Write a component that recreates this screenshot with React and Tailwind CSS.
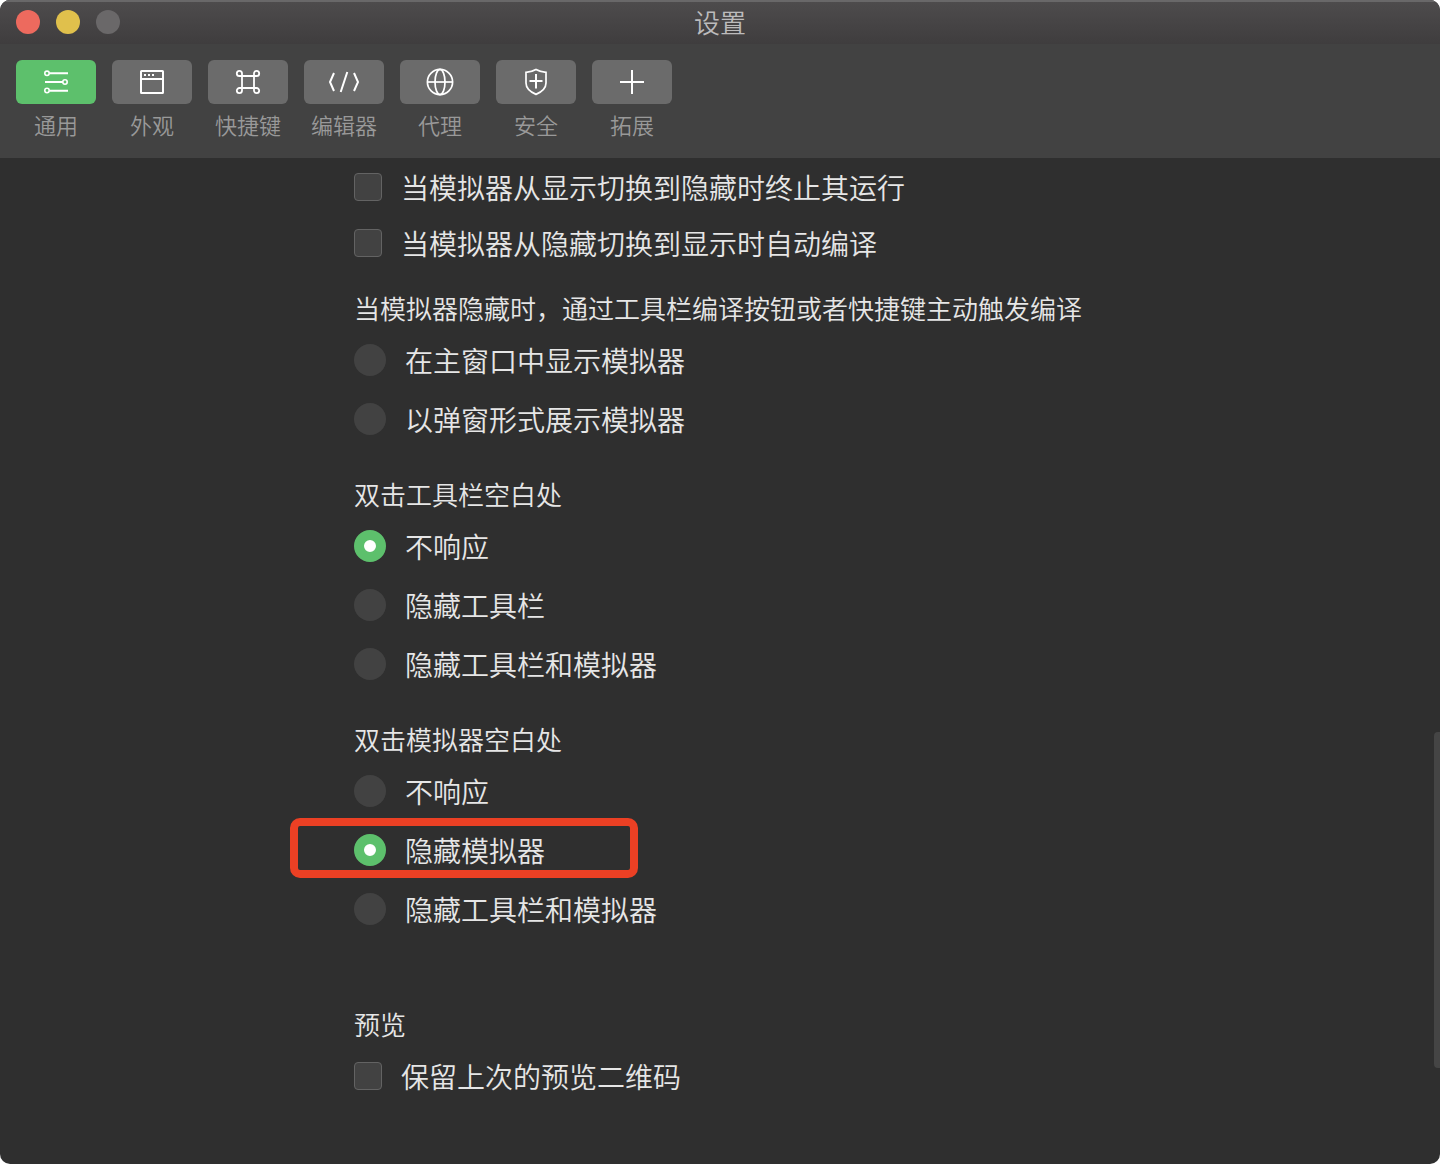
import { useState } from "react";

const iconProps = {
  width: 32,
  height: 32,
  viewBox: "0 0 32 32",
  fill: "none",
  stroke: "#fff",
  strokeWidth: 2,
  "aria-hidden": true,
};

const icons = {
  general: (
    <svg {...iconProps}>
      <circle cx="7" cy="7.3" r="2.2" strokeWidth="1.6" />
      <path d="M9.5 7.3H28M5 16h18M9.5 24.7H28" />
      <circle cx="25" cy="16" r="2.2" strokeWidth="1.6" />
      <circle cx="7" cy="24.5" r="2.2" strokeWidth="1.6" />
    </svg>
  ),
  appearance: (
    <svg {...iconProps}>
      <rect x="5" y="5" width="22" height="22" rx="0.5" />
      <path d="M5 13h22" />
      <path d="M8 9h2M12 9h2M16 9h2" />
    </svg>
  ),
  shortcuts: (
    <svg {...iconProps} strokeWidth="1.8">
      <path d="M10 10h12v12H10z" />
      <path d="M10 10V7.4A2.6 2.6 0 1 0 7.4 10H10zM22 10h2.6A2.6 2.6 0 1 0 22 7.4V10zM22 22v2.6a2.6 2.6 0 1 0 2.6-2.6H22zM10 22H7.4a2.6 2.6 0 1 0 2.6 2.6V22z" />
    </svg>
  ),
  editor: (
    <svg {...iconProps} strokeWidth="2">
      <path d="M6 7L2 16l4 9M19.3 6l-6.6 20M26 7l4 9-4 9" />
    </svg>
  ),
  proxy: (
    <svg {...iconProps} strokeWidth="1.7">
      <circle cx="16" cy="16" r="12.6" />
      <ellipse cx="16" cy="16" rx="5" ry="12.6" />
      <path d="M3.4 16h25.2" />
    </svg>
  ),
  security: (
    <svg {...iconProps} strokeWidth="1.7">
      <path d="M16 3.6c3 1.8 6.3 2.6 10 2.8v10.6c0 5-4.5 9-10 11.4C10.5 26 6 22 6 17V6.400c3.700-.2 7-1 10-2.800z" />
      <path d="M9.500 15h13M16 8v14.500" strokeWidth="2" />
    </svg>
  ),
  extensions: (
    <svg {...iconProps}>
      <path d="M4 16h24M16 4v24" />
    </svg>
  ),
};

const tabs = [
  ["general", "通用"],
  ["appearance", "外观"],
  ["shortcuts", "快捷键"],
  ["editor", "编辑器"],
  ["proxy", "代理"],
  ["security", "安全"],
  ["extensions", "拓展"],
];

function Check({ label, className }) {
  return (
    <label className={`flex items-center text-[28px] leading-8 ${className}`}>
      <input
        type="checkbox"
        className="mr-[19px] size-7 shrink-0 appearance-none rounded-sm border border-[#636363] bg-[#424242] checked:bg-[#5dc06c]"
      />
      {label}
    </label>
  );
}

function RadioGroup({ title, name, options, initial, highlighted, className }) {
  const [value, setValue] = useState(initial);
  return (
    <fieldset className={className}>
      <legend className="flex h-[45px] items-center text-[26px] leading-8">{title}</legend>
      {options.map((option) => (
        <div key={option} className="relative flex h-[59px] items-center">
          <label className="flex items-center text-[28px] leading-8">
            <input
              type="radio"
              name={name}
              checked={value === option}
              onChange={() => setValue(option)}
              className="mr-[19px] size-8 shrink-0 appearance-none rounded-full bg-[#424242] checked:border-10 checked:border-[#5dc06c] checked:bg-white"
            />
            {option}
          </label>
          {highlighted === option && (
            <span className="pointer-events-none absolute -top-0.5 -left-16 h-[60px] w-[348px] rounded-[10px] border-8 border-[#eb4024]" />
          )}
        </div>
      ))}
    </fieldset>
  );
}

export default function App() {
  const [tab, setTab] = useState("general");
  return (
    <div className="min-h-screen bg-white font-['Noto_Sans_CJK_SC',sans-serif] font-[350]">
      <div className="relative flex min-h-screen flex-col overflow-hidden rounded-[10px] bg-[#2f2f2f] text-[#e6e6e6]">
        <header className="relative flex h-11 items-center justify-center bg-linear-to-b from-[#4e4c4d] to-[#3f3d3e] pb-px inset-shadow-[0_2px_0_#696869]">
          <div className="absolute top-2.5 left-4 flex gap-4">
            <button type="button" aria-label="关闭" className="size-6 rounded-full bg-[#ed6a5e]" />
            <button type="button" aria-label="最小化" className="size-6 rounded-full bg-[#e0c04c]" />
            <button type="button" aria-label="缩放" className="size-6 rounded-full bg-[#6a6869]" />
          </div>
          <h1 className="text-[26px] leading-8 text-[#bcbbbc]">设置</h1>
        </header>

        <nav className="flex gap-4 bg-[#424242] px-4 pt-4 pb-[18px]">
          {tabs.map(([id, label]) => (
            <button
              key={id}
              type="button"
              onClick={() => setTab(id)}
              className="flex w-20 flex-col items-center gap-1 text-[22px] leading-8 text-[#999999]"
            >
              <span
                className={`flex h-11 w-full items-center justify-center rounded-md ${
                  tab === id ? "bg-[#5dc06c]" : "bg-[#6b6b6b]"
                }`}
              >
                {icons[id]}
              </span>
              {label}
            </button>
          ))}
        </nav>

        <main className="flex-1 pt-px pr-8 pb-12 pl-[354px]">
          <Check className="h-14" label="当模拟器从显示切换到隐藏时终止其运行" />
          <Check className="h-14" label="当模拟器从隐藏切换到显示时自动编译" />
          <RadioGroup
            className="mt-3.5"
            name="compile"
            title="当模拟器隐藏时，通过工具栏编译按钮或者快捷键主动触发编译"
            options={["在主窗口中显示模拟器", "以弹窗形式展示模拟器"]}
          />
          <RadioGroup
            className="mt-[23px]"
            name="toolbar"
            title="双击工具栏空白处"
            options={["不响应", "隐藏工具栏", "隐藏工具栏和模拟器"]}
            initial="不响应"
          />
          <RadioGroup
            className="mt-[23px]"
            name="simulator"
            title="双击模拟器空白处"
            options={["不响应", "隐藏模拟器", "隐藏工具栏和模拟器"]}
            initial="隐藏模拟器"
            highlighted="隐藏模拟器"
          />
          <section className="mt-[63px]">
            <h2 className="flex h-[45px] items-center text-[26px] leading-8">预览</h2>
            <Check className="h-[59px]" label="保留上次的预览二维码" />
          </section>
        </main>
        <div className="absolute right-0 bottom-24 h-[336px] w-1.5 rounded-l-sm bg-[#454545]" />
      </div>
    </div>
  );
}
